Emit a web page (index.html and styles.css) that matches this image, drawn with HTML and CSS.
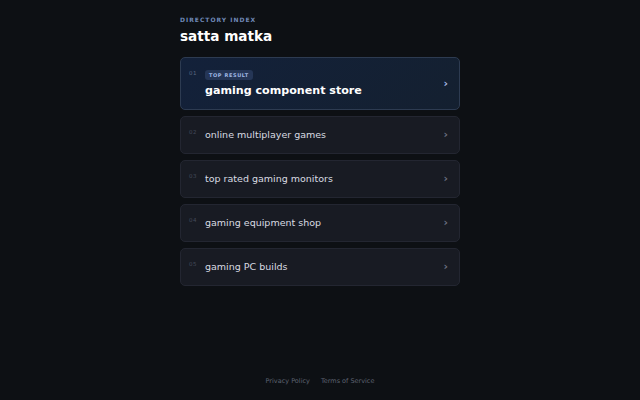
FILE: index.html
```html
<!DOCTYPE html>
<html lang="en">
<head>
<meta charset="utf-8">
<title>satta matka</title>
<link rel="stylesheet" href="styles.css">
</head>
<body>
<div class="page">
  <main class="wrap">
    <header class="head">
      <div class="eyebrow">DIRECTORY INDEX</div>
      <h1 class="title">satta matka</h1>
    </header>
    <ul class="list">
      <li class="item top">
        <span class="num">01</span>
        <div class="body">
          <span class="badge">TOP RESULT</span>
          <span class="label">gaming component store</span>
        </div>
        <span class="chev">›</span>
      </li>
      <li class="item">
        <span class="num">02</span>
        <div class="body"><span class="label">online multiplayer games</span></div>
        <span class="chev">›</span>
      </li>
      <li class="item">
        <span class="num">03</span>
        <div class="body"><span class="label">top rated gaming monitors</span></div>
        <span class="chev">›</span>
      </li>
      <li class="item">
        <span class="num">04</span>
        <div class="body"><span class="label">gaming equipment shop</span></div>
        <span class="chev">›</span>
      </li>
      <li class="item">
        <span class="num">05</span>
        <div class="body"><span class="label">gaming PC builds</span></div>
        <span class="chev">›</span>
      </li>
    </ul>
  </main>
  <footer class="foot">
    <a href="#">Privacy Policy</a>
    <a href="#">Terms of Service</a>
  </footer>
</div>
</body>
</html>
```
FILE: styles.css
```css
* { box-sizing: border-box; }
html, body { margin: 0; padding: 0; }
body {
  background: #0d1014;
  font-family: "DejaVu Sans", "Liberation Sans", sans-serif;
  color: #e6e8ee;
}
.page {
  min-height: 400px;
  display: flex;
  flex-direction: column;
  align-items: center;
}
.wrap {
  width: 280px;
  padding-top: 15px;
}
.eyebrow {
  font-size: 6px;
  font-weight: bold;
  letter-spacing: 1px;
  color: #7089b8;
  line-height: 9px;
}
.title {
  margin: 3px 0 0;
  font-size: 13.6px;
  font-weight: bold;
  color: #ffffff;
  line-height: 19px;
}
.list {
  list-style: none;
  margin: 11px 0 0;
  padding: 0;
  display: flex;
  flex-direction: column;
  gap: 6px;
}
.item {
  display: flex;
  align-items: center;
  height: 38px;
  padding: 0 11px 2px 8px;
  background: #181b23;
  border: 1px solid #232631;
  border-radius: 5px;
  position: relative;
}
.item.top {
  height: 53px;
  padding-bottom: 1px;
  background: linear-gradient(135deg, #13213a 0%, #142030 100%);
  border-color: #2d3b51;
}
.num {
  align-self: flex-start;
  margin-top: 12px;
  width: 16px;
  font-size: 5.5px;
  color: #444a5a;
  letter-spacing: 0.5px;
}
.item.top .num { margin-top: 12px; color: #5a6780; }
.body {
  flex: 1;
  display: flex;
  flex-direction: column;
  align-items: flex-start;
}
.badge {
  font-size: 5px;
  font-weight: bold;
  letter-spacing: 0.6px;
  color: #9fb6e4;
  background: #253656;
  border-radius: 3px;
  padding: 2px 4px;
  line-height: 6px;
  margin-bottom: 4px;
}
.label {
  font-size: 9.5px;
  color: #d8dbe2;
}
.item.top .label {
  font-size: 11.1px;
  font-weight: bold;
  color: #ffffff;
}
.chev {
  font-size: 11px;
  color: #6a7080;
  font-weight: bold;
}
.item.top .chev { color: #a8bde6; }
.foot {
  margin-top: auto;
  padding-bottom: 15px;
  display: flex;
  gap: 11px;
}
.foot a {
  font-size: 6.5px;
  color: #5d6270;
  text-decoration: none;
}
```
